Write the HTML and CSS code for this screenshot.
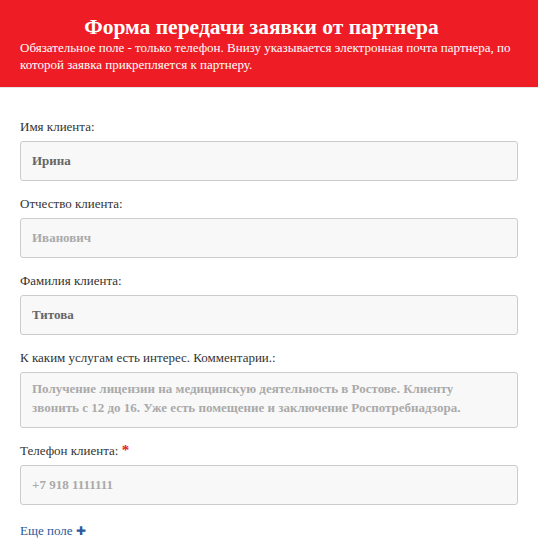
FILE: index.html
```html
<!DOCTYPE html>
<html lang="ru">
<head>
  <meta charset="UTF-8" />
  <title>Форма передачи заявки от партнера</title>
  <link rel="stylesheet" href="styles.css">
</head>
<body>

  <header>
    <h1>Форма передачи заявки от партнера</h1>
    <p>Обязательное поле - только телефон. Внизу указывается электронная почта партнера, по которой заявка прикрепляется к партнеру.</p>
  </header>

  <form class="lead-form">
    <div class="field">
      <label for="fname">Имя клиента:</label>
      <input type="text" id="fname" value="Ирина">
    </div>
    <div class="field">
      <label for="mname">Отчество клиента:</label>
      <input type="text" id="mname" placeholder="Иванович">
    </div>
    <div class="field">
      <label for="lname">Фамилия клиента:</label>
      <input type="text" id="lname" value="Титова">
    </div>
    <div class="field">
      <label for="comment">К каким услугам есть интерес. Комментарии.:</label>
      <textarea id="comment" placeholder="Получение лицензии на медицинскую деятельность в Ростове. Клиенту звонить с 12 до 16. Уже есть помещение и заключение Роспотребнадзора."></textarea>
    </div>
    <div class="field">
      <label for="phone">Телефон клиента: <span class="req">*</span></label>
      <input type="tel" id="phone" placeholder="+7 918 1111111">
    </div>
    <a href="#" class="more">Еще поле <span class="plus">✚</span></a>
  </form>

</body>
</html>
```

FILE: styles.css
```css
* { box-sizing: border-box; }
body {
  margin: 0;
  font-family: "Liberation Serif", "Times New Roman", serif;
  font-size: 13px;
  color: #333;
  background: #fff;
}
header {
  background: #ee1c25;
  color: white;
  padding: 15px 20px 14px;
  border-bottom: 1px solid #e4e4e4;
}
header h1 {
  margin: 0 15px 0 0;
  text-align: center;
  font-size: 21.5px;
  line-height: 24px;
}
header p {
  margin: 0;
  line-height: 17px;
}

.lead-form {
  padding: 32px 20px 0;
}
.field {
  margin-bottom: 16px;
}
.field label {
  display: block;
  line-height: 14px;
  margin-bottom: 7px;
}
.field input, .field textarea {
  display: block;
  width: 100%;
  height: 40px;
  padding: 0 11px;
  border: 1px solid #ccc;
  border-radius: 3px;
  background: #f8f8f8;
  font-family: inherit;
  font-size: 13px;
  font-weight: bold;
  color: #666;
}
.field textarea {
  height: 56px;
  padding: 6px 40px 8px 11px;
  line-height: 19px;
  resize: none;
  overflow: hidden;
}
.field ::placeholder {
  color: #aaa;
  opacity: 1;
}
.req {
  color: #e8192c;
  font-weight: bold;
  font-size: 15px;
  vertical-align: top;
  line-height: 12px;
}
.more {
  display: inline-block;
  margin-top: 2px;
  color: #2a5a9c;
  text-decoration: none;
}
.plus {
  font-size: 12px;
}
```
